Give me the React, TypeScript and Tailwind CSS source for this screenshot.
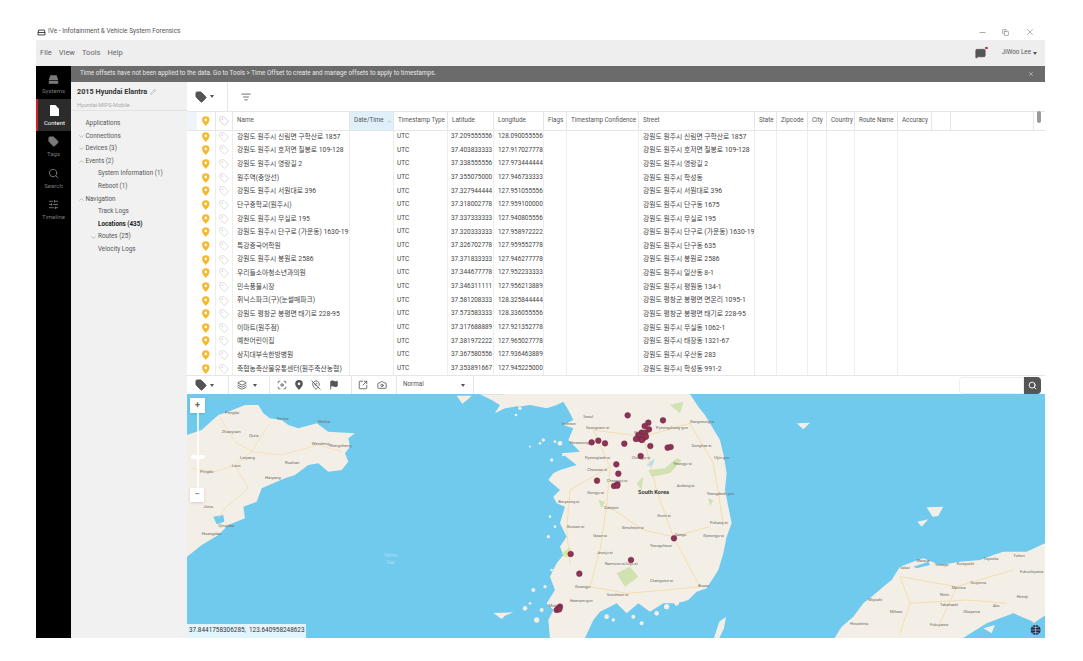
import { Camera, ChevronDown, ChevronUp, Copy, Flag, Focus, Layers, ListFilter, MapPinOff, MessageSquare, Minus, Pencil, Search, SlidersHorizontal, SquareArrowOutUpRight, Tag, X } from "lucide-react";
import type { ReactNode } from "react";

const font = "font-['Roboto','Noto_Sans_CJK_KR',sans-serif]";
const gridCols =
  "grid-cols-[10px_19px_17px_117px_44px_54px_46px_50px_23px_72px_116px_22px_31px_19px_28px_43px_34px_19px_83px]";

const headers = [
  "Name",
  "Date/Time",
  "Timestamp Type",
  "Latitude",
  "Longitude",
  "Flags",
  "Timestamp Confidence",
  "Street",
  "State",
  "Zipcode",
  "City",
  "Country",
  "Route Name",
  "Accuracy",
  "",
  "",
];

const rows = [
  ["강원도 원주시 신림면 구학산로 1857", "37.209555556", "128.090055556", "강원도 원주시 신림면 구학산로 1857"],
  ["강원도 원주시 호저면 칠봉로 109-128", "37.403833333", "127.917027778", "강원도 원주시 호저면 칠봉로 109-128"],
  ["강원도 원주시 영랑길 2", "37.338555556", "127.973444444", "강원도 원주시 영랑길 2"],
  ["원주역(중앙선)", "37.355075000", "127.946733333", "강원도 원주시 학성동"],
  ["강원도 원주시 서원대로 396", "37.327944444", "127.951055556", "강원도 원주시 서원대로 396"],
  ["단구중학교(원주시)", "37.318002778", "127.959100000", "강원도 원주시 단구동 1675"],
  ["강원도 원주시 무실로 195", "37.337333333", "127.940805556", "강원도 원주시 무실로 195"],
  ["강원도 원주시 단구로 (가운동) 1630-19", "37.320333333", "127.958972222", "강원도 원주시 단구로 (가운동) 1630-19"],
  ["특강중국어학원", "37.326702778", "127.959552778", "강원도 원주시 단구동 635"],
  ["강원도 원주시 봉원로 2586", "37.371833333", "127.946277778", "강원도 원주시 봉원로 2586"],
  ["우리들소아청소년과의원", "37.344677778", "127.952233333", "강원도 원주시 일산동 8-1"],
  ["민속풍물시장", "37.346311111", "127.956213889", "강원도 원주시 평원동 134-1"],
  ["휘닉스파크(구)(눈썰매파크)", "37.581208333", "128.325844444", "강원도 평창군 봉평면 면온리 1095-1"],
  ["강원도 평창군 봉평면 태기로 228-95", "37.573583333", "128.336055556", "강원도 평창군 봉평면 태기로 228-95"],
  ["이마트(원주점)", "37.317688889", "127.921352778", "강원도 원주시 무실동 1062-1"],
  ["예찬어린이집", "37.381972222", "127.965027778", "강원도 원주시 태장동 1321-67"],
  ["상지대부속한방병원", "37.367580556", "127.936463889", "강원도 원주시 우산동 283"],
  ["축협농축산물유통센터(원주축산농협)", "37.353891667", "127.945225000", "강원도 원주시 학성동 991-2"],
];

const markers = [
  [353, 76], [459, 91], [415, 98], [404, 108], [417, 118], [395, 128], [405, 128], [385, 135], [378, 147],
  [392, 148], [400, 145], [408, 140], [396, 150], [421, 168], [343, 161], [285, 160], [265, 152], [245, 157],
  [473, 173], [482, 171], [392, 198], [319, 223], [325, 251], [261, 272], [322, 283], [312, 288], [322, 287],
  [363, 510], [492, 445], [182, 492], [208, 551], [150, 650], [145, 655], [140, 660], [148, 658],
];

const islands = [
  [150, 160, 7], [135, 155, 4], [100, 150, 5], [90, 160, 4], [60, 170, 3], [125, 210, 5], [160, 195, 4],
  [120, 380, 4], [135, 410, 4], [115, 440, 5], [125, 540, 4], [105, 590, 5], [70, 600, 6], [45, 655, 7],
  [80, 690, 8], [95, 660, 6], [60, 640, 4], [175, 700, 5], [290, 680, 7], [310, 690, 5], [370, 680, 6],
  [395, 700, 6], [440, 670, 7], [470, 650, 8], [500, 640, 7], [520, 630, 5], [200, 725, 6], [30, 55, 5], [18, 75, 4],
];

const koreaLabels: [string, number, number][] = [
  ["Seoul", 220, 84], ["Seongnam-si", 228, 118], ["Hwaseong-si", 180, 163], ["Pyeongtaek-si", 225, 206],
  ["Cheonan-si", 232, 243], ["Cheongju-si", 290, 277], ["Gongju-si", 232, 313], ["Daejeon", 283, 356],
  ["Wonju-si", 372, 133], ["Chungju-si", 365, 206], ["Pyeongchang-gun", 438, 117], ["Gangneung-si", 540, 98],
  ["Donghae-si", 545, 170], ["Uljin-gun", 612, 208], ["Yeongju-si", 490, 225], ["Andong-si", 500, 292],
  ["Yeongdeok-gun", 590, 315], ["Gumi-si", 442, 382], ["Daegu", 495, 438], ["Pohang-si", 600, 403],
  ["Gyeongju-si", 580, 440], ["Gimcheon-si", 335, 417], ["Jeonju-si", 260, 492], ["Namwon-si", 285, 525],
  ["Gwangju", 195, 595], ["Busan", 565, 592], ["Changwon-si", 420, 575], ["Jinju-si", 345, 525],
  ["Suncheon-si", 290, 618], ["Mokpo", 116, 650], ["Haenam-gun", 180, 635], ["Boryeong-si", 145, 340],
  ["Gunsan-si", 170, 414], ["Iksan-si", 250, 440], ["Incheon", 155, 104], ["Yeongcheon", 420, 470],
];

const shandongLabels: [string, number, number][] = [
  ["Yantai", 275, 135], ["Penglai", 120, 118], ["Weihai", 398, 143], ["Zhaoyuan", 110, 175], ["Qixia", 192, 186],
  ["Laiyang", 165, 253], ["Haiyang", 240, 313], ["Rushan", 300, 267], ["Wendeng", 380, 210], ["Rongcheng", 435, 215],
  ["Jimo", 55, 400], ["Qingdao", 100, 455], ["Huangdao", 50, 480], ["Pingdu", 45, 295], ["Laixi", 140, 276],
];

const japanLabels: [string, number, number][] = [
  ["Matsue", 350, 575], ["Sakai", 300, 596], ["Yonago", 405, 587], ["Tottori", 640, 560], ["Kurayoshi", 470, 586],
  ["Maniwa", 455, 658], ["Tsuyama", 510, 643], ["Miyoshi", 205, 692], ["Niimi", 420, 677], ["Takahashi", 420, 708],
  ["Fukuyama", 390, 768], ["Okayama", 490, 730], ["Mihara", 270, 730], ["Hiroshima", 150, 765], ["Himeji", 650, 685],
  ["Fukuchiyama", 660, 608], ["Ako", 578, 712], ["Toyooka", 550, 570],
];

function Pin() {
  return (
    <svg viewBox="0 0 10 13" className="h-[10px] w-[7.500px]">
      <path d="M5 0a5 5 0 0 1 5 5c0 3-3 5.500-5 8-2-2.500-5-5-5-8a5 5 0 0 1 5-5z" fill="#f4b92d" />
      <circle cx="5" cy="5" r="1.700" fill="#ffffff" />
    </svg>
  );
}

function Divider() {
  return <div className="h-full w-px bg-[#e6e6e6]" />;
}

function Caret() {
  return <div className="h-0 w-0 border-x-[2.5px] border-t-[3px] border-x-transparent border-t-[#555]" />;
}

function SideItem({ label, icon, active, className }: { label: string; icon: ReactNode; active?: boolean; className: string }) {
  return (
    <div
      className={`flex flex-col items-center justify-end gap-[2px] pb-[4px] text-[6px] ${className} ${
        active ? "border-l-2 border-[#c8242c] bg-[#2b2b2b] text-white" : "text-[#7a7a7a]"
      }`}
    >
      {icon}
      <span>{label}</span>
    </div>
  );
}

function TreeItem({ label, open, indent = "pl-[14.5px]", bold }: { label: string; open?: boolean; indent?: string; bold?: boolean }) {
  return (
    <div className={`flex h-[12.6px] items-center ${indent} ${bold ? "font-bold text-[#222]" : "text-[#555]"}`}>
      {open === true && <ChevronUp size={7} className="mr-[1px] -ml-[8px] text-[#999]" />}
      {open === false && <ChevronDown size={7} className="mr-[1px] -ml-[8px] text-[#999]" />}
      {label}
    </div>
  );
}

function MapArea() {
  return (
    <svg viewBox="187 394 858 244" className="h-full w-full" preserveAspectRatio="none">
      <rect x="187" y="394" width="858" height="244" fill="#70caee" />

      {/* Shandong */}
      <g transform="translate(185 375) scale(0.3333)">
        <polygon
          fill="#f3efe7"
          points="6,180 50,165 100,120 130,110 180,90 220,90 235,115 255,130 290,135 310,150 340,160 395,145 430,170 510,175 490,190 495,215 480,235 490,260 470,285 430,290 400,265 370,270 330,300 300,310 230,340 215,380 175,395 180,430 130,450 100,480 50,510 6,545"
        />
        <polygon fill="#f3efe7" points="885,58 990,58 990,95 960,100 930,115 945,90 920,75" />
        <polygon fill="#f3efe7" points="815,62 860,62 850,72 832,86" />
        <polygon fill="#f3efe7" points="925,714 985,712 960,722 950,732" />
        <polygon fill="#70caee" points="85,425 115,420 118,440 95,448" />
        <polyline fill="none" stroke="#f6d9a4" strokeWidth="2" points="20,280 90,290 150,270 200,230 290,240 400,210 470,230" />
        <polyline fill="none" stroke="#f6d9a4" strokeWidth="2" points="150,270 190,340 120,400 100,430" />
        <polyline fill="none" stroke="#f6d9a4" strokeWidth="2" points="100,120 150,200 200,230 250,150" />
        {shandongLabels.map(([t, x, y]) => (
          <text key={t} x={x} y={y} fontSize="13" fill="#6d6a64" fontFamily="Roboto, sans-serif">
            {t}
          </text>
        ))}
        <text x="597" y="545" fontSize="14" fill="#a8def5" fontFamily="Roboto, sans-serif">Yellow</text>
        <text x="605" y="568" fontSize="14" fill="#a8def5" fontFamily="Roboto, sans-serif">Sea</text>
      </g>

      {/* Korea */}
      <g transform="translate(510 390) scale(0.3333)">
        <polygon
          fill="#f3efe7"
          points="-15,12 540,12 565,50 585,75 600,100 615,125 630,150 642,200 650,250 645,300 655,350 665,400 650,440 640,490 625,540 590,595 560,605 535,630 500,640 460,640 420,665 385,640 350,670 320,640 300,650 270,665 250,690 225,744 120,744 115,690 130,660 110,640 135,600 120,560 140,520 160,495 150,470 170,440 150,400 165,350 140,340 130,320 150,300 115,270 130,250 150,240 200,225 155,190 210,185 175,150 190,115 160,105 190,90 175,60 160,35 140,45 110,55 60,45 25,50 -15,40"
        />
        {islands.map(([x, y, r]) => (
          <circle key={`${x}-${y}`} cx={x} cy={y} r={r} fill="#f3efe7" />
        ))}
        <polygon fill="#f3efe7" points="628,695 648,680 642,715 628,744 612,744" />
        <polygon fill="#f3efe7" points="860,100 890,100 878,116" />
        <polygon fill="#cfe2b0" points="415,240 465,235 500,205 515,210 480,250 425,260" />
        <polygon fill="#cfe2b0" points="320,550 360,530 385,560 345,590" />
        <polygon fill="#cfe2b0" points="480,45 520,35 510,70" />
        <polygon fill="#cfe2b0" points="380,280 400,260 395,300" />
        <polygon fill="#d5e7a0" points="155,490 180,472 188,498 165,502" />
        <polygon fill="#cfe2b0" points="595,325 610,330 600,348" />
        <polygon fill="#cfe2b0" points="265,330 285,335 275,355" />
        <polygon fill="#a9dff4" points="410,225 435,205 425,230" />
        <polyline fill="none" stroke="#f6d9a4" strokeWidth="2.5" points="250,120 300,230 290,345 270,480 240,590" />
        <polyline fill="none" stroke="#f6d9a4" strokeWidth="2.5" points="250,120 400,140 540,100" />
        <polyline fill="none" stroke="#f6d9a4" strokeWidth="2.5" points="400,140 440,300 490,440 570,590" />
        <polyline fill="none" stroke="#f6d9a4" strokeWidth="2.5" points="290,345 400,420 490,440 600,410" />
        <polyline fill="none" stroke="#f6d9a4" strokeWidth="2.5" points="240,590 350,610 470,600 570,590" />
        <polyline fill="none" stroke="#f6d9a4" strokeWidth="2.5" points="300,230 180,300 170,420 180,520" />
        <polyline fill="none" stroke="#f6d9a4" strokeWidth="2.5" points="540,100 610,220 640,400" />
        {koreaLabels.map(([t, x, y]) => (
          <text key={t} x={x} y={y} fontSize="12" fill="#6d6a64" fontFamily="Roboto, sans-serif">
            {t}
          </text>
        ))}
        <text x="384" y="311" fontSize="17" fontWeight="700" fill="#3c3c3c" fontFamily="Roboto, sans-serif">
          South Korea
        </text>
        {markers.map(([x, y]) => (
          <circle key={`${x}-${y}`} cx={x} cy={y} r="8.5" fill="#8f3354" stroke="#6e2340" strokeWidth="1.5" />
        ))}
      </g>

      {/* Japan */}
      <g transform="translate(800 370) scale(0.3333)">
        <polygon
          fill="#f3efe7"
          points="100,810 125,770 160,740 190,700 215,680 250,650 275,630 300,590 340,575 370,565 420,585 480,575 540,570 580,555 610,545 680,545 735,520 745,520 745,730 700,760 640,730 580,770 530,790 480,810"
        />
        <polygon fill="#f3efe7" points="380,412 430,410 415,438 398,440" />
        <polygon fill="#f3efe7" points="352,455 385,448 365,470" />
        <polygon fill="#f3efe7" points="0,160 30,158 10,178" />
        <polygon fill="#70caee" points="340,590 385,575 390,585 350,595" />
        <polyline fill="none" stroke="#f6d9a4" strokeWidth="2.5" points="300,620 330,700 300,790" />
        <polyline fill="none" stroke="#f6d9a4" strokeWidth="2.5" points="300,620 470,650 640,600" />
        <polyline fill="none" stroke="#f6d9a4" strokeWidth="2.5" points="330,700 500,690 620,700" />
        <polyline fill="none" stroke="#f6d9a4" strokeWidth="2.5" points="470,650 420,760" />
        {japanLabels.map(([t, x, y]) => (
          <text key={t} x={x} y={y} fontSize="12" fill="#6d6a64" fontFamily="Roboto, sans-serif">
            {t}
          </text>
        ))}
        <polygon fill="#70caee" points="480,810 560,760 640,730 700,755 670,810" />
        <polygon fill="#f3efe7" points="550,775 585,765 575,790" />
        <circle cx="707" cy="780" r="15" fill="#14304f" />
        <path d="M692 780h30M707 765v30M696 770q11 6 22 0M696 790q11-6 22 0" stroke="#ffffff" strokeWidth="1.5" fill="none" />
      </g>
    </svg>
  );
}

export default function App() {
  return (
    <div className={`${font} flex h-[661px] w-[1083px] flex-col overflow-hidden bg-white pb-[23px] pl-[36px] pr-[38px] text-[6.3px] text-[#444]`}>
      {/* Title bar */}
      <div className="flex h-[40px] shrink-0 items-end justify-between pb-[3px]">
        <div className="flex items-center gap-[2px] pl-[1px] text-[6.5px] text-[#555]">
          <svg viewBox="0 0 12 10" className="h-[7px] w-[9px]" fill="none" stroke="#333" strokeWidth="1.3">
            <path d="M1 5l1-3.500h8l1 3.500v3.500H1zM1 5h10" />
          </svg>
          <span>IVe - Infotainment &amp; Vehicle System Forensics</span>
        </div>
        <div className="flex items-center gap-[13px] pr-[10px] text-[#444]">
          <Minus size={9} strokeWidth={1.2} />
          <Copy size={7} strokeWidth={1.5} className="ml-[2px]" />
          <X size={10} strokeWidth={1} className="ml-[3px]" />
        </div>
      </div>

      {/* Menu bar */}
      <div className="flex h-[26px] shrink-0 items-center justify-between bg-[#eeeeee] pl-[4px] pr-[8px]">
        <div className="flex gap-[7px] text-[7.5px] text-[#666]">
          <span>File</span>
          <span>View</span>
          <span>Tools</span>
          <span>Help</span>
        </div>
        <div className="flex items-center gap-[16px]">
          <div className="relative">
            <MessageSquare size={11} fill="#555" color="#555" />
            <div className="absolute -right-[2px] -top-[1px] h-[2.5px] w-[2.5px] rounded-full bg-[#d8202a]" />
          </div>
          <div className="flex items-center gap-[2px] text-[#555]">
            JiWoo Lee
            <Caret />
          </div>
        </div>
      </div>

      <div className="flex min-h-0 flex-1">
        {/* Icon rail */}
        <div className="flex w-[35px] shrink-0 flex-col bg-black">
          <SideItem
            label="Systems"
            className="h-[33px]"
            icon={
              <svg viewBox="0 0 14 11" className="h-[9px] w-[11px]" fill="#7a7a7a">
                <path d="M3 0h8l2 6H1z" />
                <path d="M1 7h12v4H1z" />
              </svg>
            }
          />
          <SideItem
            label="Content"
            active
            className="h-[31.5px]"
            icon={
              <svg viewBox="0 0 10 12" className="h-[11px] w-[9px]" fill="#ffffff">
                <path d="M0 0h6l4 4v8H0z" />
              </svg>
            }
          />
          <SideItem label="Tags" className="h-[31.5px]" icon={<Tag size={11} fill="#7a7a7a" color="#7a7a7a" />} />
          <SideItem label="Search" className="h-[31.5px]" icon={<Search size={11} color="#7a7a7a" />} />
          <SideItem label="Timeline" className="h-[31.5px]" icon={<SlidersHorizontal size={11} color="#7a7a7a" />} />
        </div>

        <div className="flex min-w-0 flex-1 flex-col">
          {/* Offset notice */}
          <div className="flex h-[16px] shrink-0 items-center justify-between bg-[#6b6b6b] pl-[9px] pr-[11px] text-[6.3px] text-[#e8e8e8]">
            <span>Time offsets have not been applied to the data. Go to Tools &gt; Time Offset to create and manage offsets to apply to timestamps.</span>
            <X size={6} />
          </div>

          <div className="flex min-h-0 flex-1">
            {/* Tree */}
            <div className="flex w-[116px] shrink-0 flex-col bg-[#f1f1f1]">
              <div className="h-[29px] shrink-0 border-b border-[#e2e2e2] pl-[6px] pt-[5px]">
                <div className="flex items-center gap-[3px] text-[7.3px] font-bold text-[#333]">
                  2015 Hyundai Elantra
                  <Pencil size={6} className="text-[#aaa]" />
                </div>
                <div className="mt-[3px] text-[5.5px] text-[#aaa]">Hyundai-MIPS-Mobile</div>
              </div>
              <div className="flex flex-col pt-[6.5px]">
                <TreeItem label="Applications" />
                <TreeItem label="Connections" open={false} />
                <TreeItem label="Devices (3)" open={false} />
                <TreeItem label="Events (2)" open />
                <TreeItem label="System Information (1)" indent="pl-[27px]" />
                <TreeItem label="Reboot (1)" indent="pl-[27px]" />
                <TreeItem label="Navigation" open />
                <TreeItem label="Track Logs" indent="pl-[27px]" />
                <TreeItem label="Locations (435)" indent="pl-[27px]" bold />
                <TreeItem label="Routes (25)" open={false} indent="pl-[27px]" />
                <TreeItem label="Velocity Logs" indent="pl-[27px]" />
              </div>
            </div>

            {/* Main */}
            <div className="flex min-w-0 flex-1 flex-col">
              <div className="flex h-[29px] shrink-0 items-center">
                <div className="flex h-full w-[41px] items-center gap-[3px] border-r border-[#e6e6e6] pl-[8px]">
                  <Tag size={12} fill="#555" color="#555" />
                  <Caret />
                </div>
                <ListFilter size={10} className="ml-[13px] text-[#555]" />
              </div>

              {/* Table */}
              <div className="relative h-[264px] shrink-0 overflow-hidden">
                <div className={`relative z-10 grid h-[20px] ${gridCols} border-y border-[#e6e6e6] bg-white text-[#555]`}>
                  <div className="bg-[#eef4f9]" />
                  <div className="flex items-center justify-center border-r border-[#e6e6e6]">
                    <Pin />
                  </div>
                  <div className="flex items-center justify-center border-r border-[#e6e6e6]">
                    <Tag size={10} color="#aaa" strokeWidth={1.2} />
                  </div>
                  {headers.map((h, i) => (
                    <div
                      key={`${h}-${i}`}
                      className={`flex items-center gap-[3px] border-r border-[#e6e6e6] pl-[4px] whitespace-nowrap ${h === "Date/Time" ? "bg-[#dff0fa]" : ""}`}
                    >
                      {h}
                      {h === "Date/Time" && <ChevronUp size={5} className="text-[#888]" />}
                    </div>
                  ))}
                </div>
                <div className="-mt-[1px] text-[6.8px]">
                  {rows.map((r) => (
                    <div key={r[1]} className={`grid h-[13.65px] ${gridCols}`}>
                      <div />
                      <div className="flex items-center justify-center border-r border-[#eeeeee]">
                        <Pin />
                      </div>
                      <div className="flex items-center justify-center border-r border-[#eeeeee]">
                        <Tag size={10} color="#b5b5b5" strokeWidth={1.1} />
                      </div>
                      <div className="flex items-center truncate border-r border-[#eeeeee] pl-[4px]">{r[0]}</div>
                      <div className="border-r border-[#eeeeee]" />
                      <div className="flex items-center border-r border-[#eeeeee] pl-[3px] text-[6.5px]">UTC</div>
                      <div className="flex items-center border-r border-[#eeeeee] pl-[3px] text-[6.4px]">{r[1]}</div>
                      <div className="flex items-center border-r border-[#eeeeee] pl-[4px] text-[6.4px]">{r[2]}</div>
                      <div className="border-r border-[#eeeeee]" />
                      <div className="border-r border-[#eeeeee]" />
                      <div className="flex items-center truncate border-r border-[#eeeeee] pl-[4px]">{r[3]}</div>
                      <div className="border-r border-[#eeeeee]" />
                      <div className="border-r border-[#eeeeee]" />
                      <div className="border-r border-[#eeeeee]" />
                      <div className="border-r border-[#eeeeee]" />
                      <div className="border-r border-[#eeeeee]" />
                    </div>
                  ))}
                </div>
                <div className="absolute right-[4px] top-0 z-20 h-[12px] w-[4px] rounded-full bg-[#9a9a9a]" />
              </div>

              {/* Map toolbar */}
              <div className="flex h-[19px] shrink-0 items-center border-t border-[#e6e6e6] text-[#555]">
                <div className="flex h-full w-[41px] items-center gap-[3px] pl-[8px]">
                  <Tag size={12} fill="#555" color="#555" />
                  <Caret />
                </div>
                <Divider />
                <div className="flex h-full w-[40px] items-center gap-[6px] pl-[8px]">
                  <Layers size={10} />
                  <Caret />
                </div>
                <Divider />
                <div className="flex h-full w-[81px] items-center gap-[8px] pl-[7px]">
                  <Focus size={10} />
                  <svg viewBox="0 0 10 13" className="h-[10px] w-[8px]" fill="#555">
                    <path d="M5 0a5 5 0 0 1 5 5c0 3-3 5.500-5 8-2-2.500-5-5-5-8a5 5 0 0 1 5-5z" />
                    <circle cx="5" cy="5" r="1.700" fill="#ffffff" />
                  </svg>
                  <MapPinOff size={10} />
                  <Flag size={10} fill="#555" />
                </div>
                <Divider />
                <div className="flex h-full w-[44px] items-center gap-[9px] pl-[6px]">
                  <SquareArrowOutUpRight size={10} />
                  <Camera size={10} />
                </div>
                <Divider />
                <div className="flex h-full w-[76px] items-center justify-between pl-[6px] pr-[8px] text-[6.3px]">
                  Normal
                  <Caret />
                </div>
                <Divider />
                <div className="ml-auto mr-[4px] flex h-[17px] items-stretch">
                  <div className="w-[65px] rounded-l-sm border border-[#eeeeee]" />
                  <div className="flex w-[17px] items-center justify-center rounded-r-sm bg-[#555]">
                    <Search size={9} color="#fff" strokeWidth={2.5} />
                  </div>
                </div>
              </div>

              {/* Map */}
              <div className="relative min-h-0 flex-1 overflow-hidden">
                <MapArea />
                <div className="absolute left-[3px] top-[4px] flex h-[15px] w-[15px] items-center justify-center bg-white shadow-sm">
                  <span className="text-[9px] font-bold text-[#666]">+</span>
                </div>
                <div className="absolute left-[9.500px] top-[19px] h-[75px] w-[2px] bg-white/80" />
                <div className="absolute left-[4px] top-[61px] h-[4px] w-[14px] rounded-sm bg-white" />
                <div className="absolute left-[3px] top-[94px] flex h-[14px] w-[14px] items-center justify-center bg-white shadow-sm">
                  <span className="text-[9px] font-bold text-[#888]">−</span>
                </div>
                <div className="absolute bottom-0 left-0 flex h-[14px] w-[119px] items-center bg-[#e2f4fc] pl-[2px] text-[6.4px] text-[#333]">
                  37.8441758306285,&nbsp;&nbsp;123.640958248623
                </div>
              </div>
            </div>
          </div>
        </div>
      </div>
    </div>
  );
}
